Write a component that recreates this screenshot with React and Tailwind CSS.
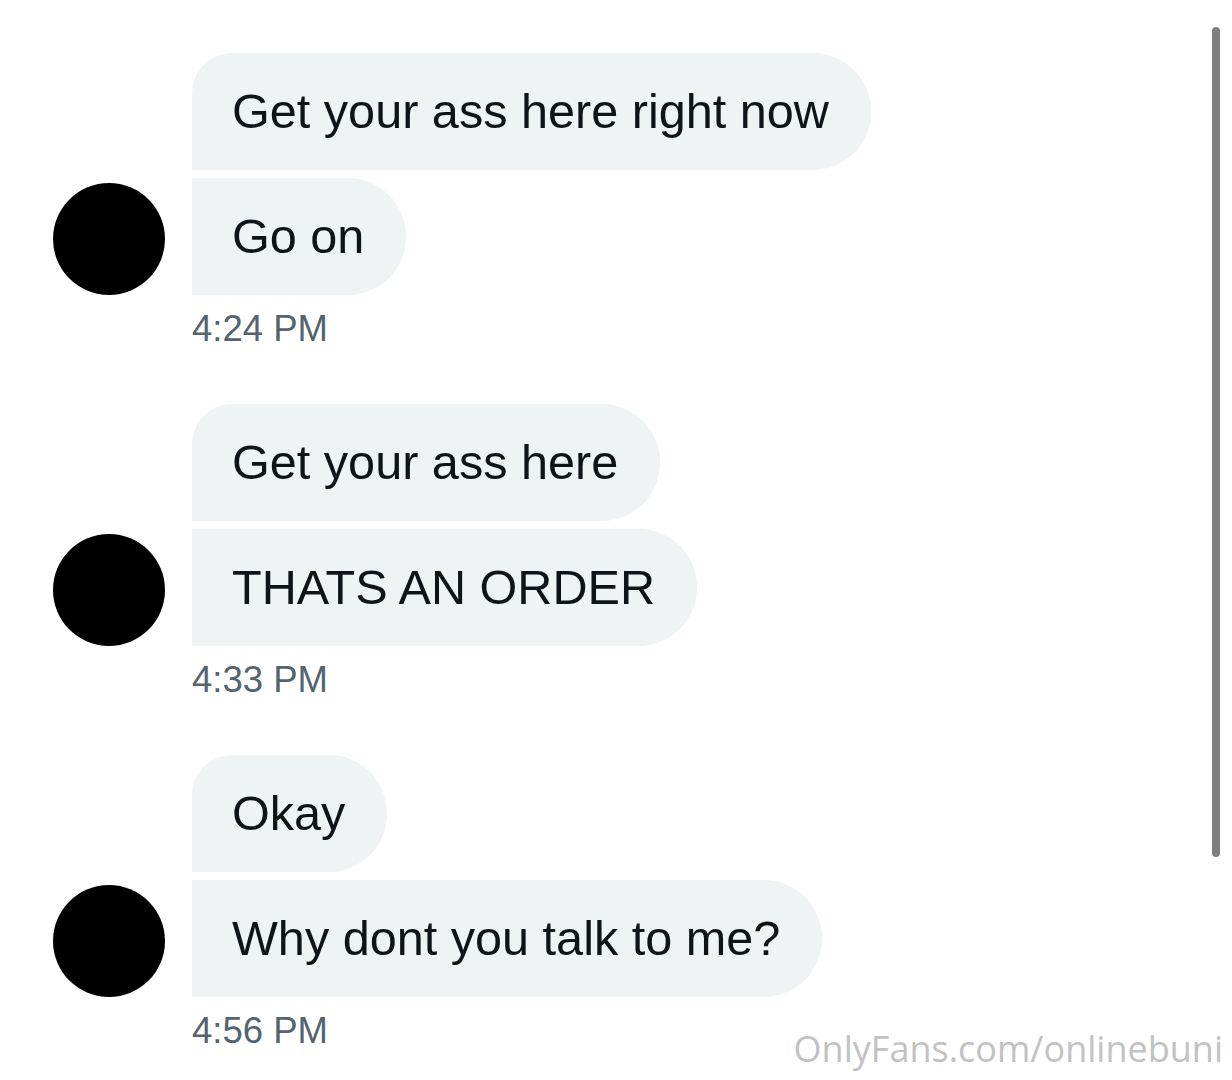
const GROUPS = [
  { messages: ['Get your ass here right now', 'Go on'], time: '4:24 PM' },
  { messages: ['Get your ass here', 'THATS AN ORDER'], time: '4:33 PM' },
  { messages: ['Okay', 'Why dont you talk to me?'], time: '4:56 PM' },
];

const Bubble = ({ text, first }) => (
  <div
    className={`h-[117px] flex items-center pl-10 pr-[42px] bg-[#eff3f4] text-[#0f1419] text-[48.6px] leading-none rounded-r-[58px] ${
      first ? 'rounded-tl-[40px]' : ''
    }`}
  >
    {text}
  </div>
);

const MessageGroup = ({ group }) => (
  <div className="flex flex-col">
    <div className="flex items-end gap-[27px] pl-[53px]">
      <div className="w-[112px] h-[112px] rounded-full bg-black shrink-0" />
      <div className="flex flex-col items-start gap-2">
        {group.messages.map((m, i) => (
          <Bubble key={i} text={m} first={i === 0} />
        ))}
      </div>
    </div>
    <div className="mt-4 pl-[192px] text-[36.5px] leading-[35px] text-[#536471]">{group.time}</div>
  </div>
);

export default function App() {
  return (
    <div
      className="relative h-[1080px] w-[1232px] overflow-hidden bg-white"
      style={{ fontFamily: '"Liberation Sans", Arial, sans-serif' }}
    >
      <div className="flex flex-col gap-[58px] pt-[53px]">
        {GROUPS.map((g, i) => (
          <MessageGroup key={i} group={g} />
        ))}
      </div>

      {/* scrollbar */}
      <div className="absolute left-[1212px] top-[27px] w-2 h-[830px] rounded-full bg-[#7f7f7f]" />

      {/* watermark */}
      <div
        className="absolute right-[9px] top-[1031px] text-[36px] leading-none text-[#c2c2c2]"
        style={{ fontFamily: '"Open Sans", sans-serif' }}
      >
        OnlyFans.com/onlinebuni
      </div>
    </div>
  );
}
